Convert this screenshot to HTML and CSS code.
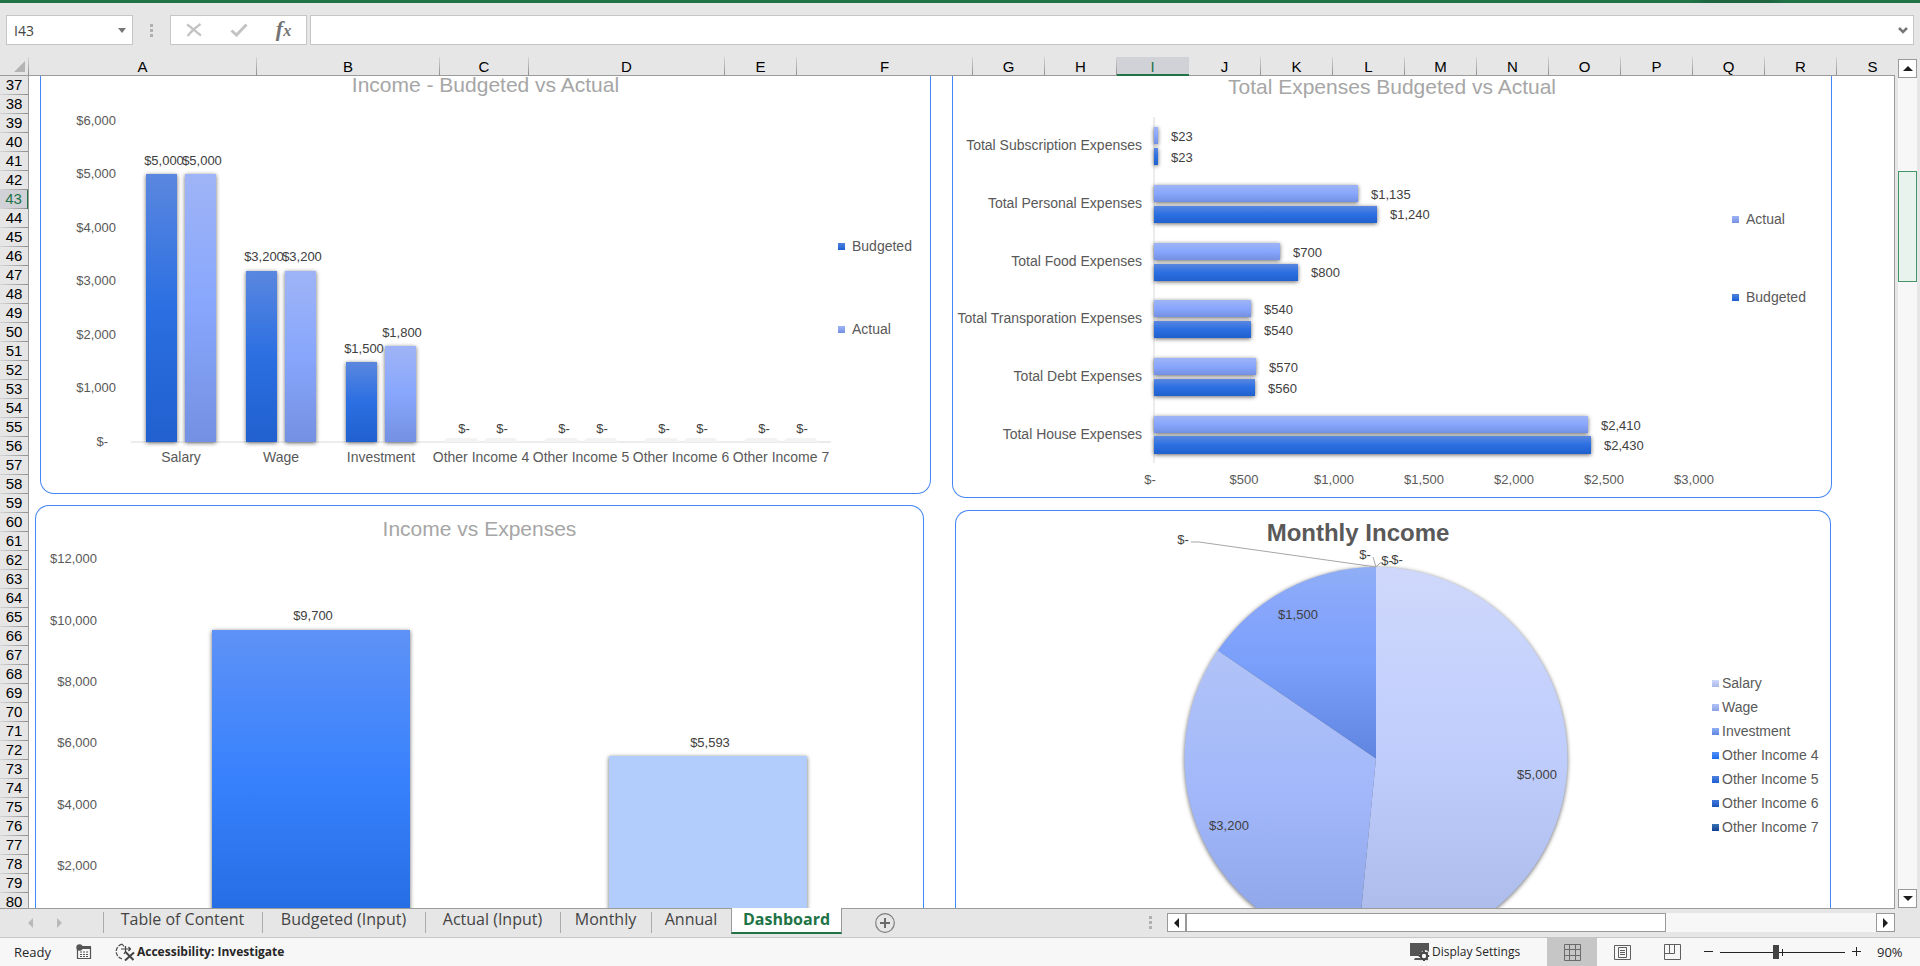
FILE: index.html
```html
<!DOCTYPE html>
<html lang="en">
<head>
<meta charset="utf-8">
<title>Budget Dashboard</title>
<link rel="stylesheet" href="styles.css">
</head>
<body>
<div class="title-strip"></div>

<header class="formula-row">
  <div class="name-box">
    <input class="name-input" type="text" value="I43" aria-label="Name box">
    <button class="icon-btn name-drop" aria-label="Open name list"><svg width="8" height="5" viewBox="0 0 8 5"><path d="M0 0h8L4 5z" fill="#777"/></svg></button>
  </div>
  <div class="grip"><i></i><i></i><i></i></div>
  <div class="fx-group">
    <button class="icon-btn" aria-label="Cancel"><svg width="16" height="14" viewBox="0 0 16 14"><path d="M1 1.500C5 4 10 9 15 12.500M14.500 1C10 4 5 8.500 1.500 13" fill="none" stroke="#c3c3c3" stroke-width="2.200"/></svg></button>
    <button class="icon-btn" aria-label="Enter"><svg width="18" height="14" viewBox="0 0 18 14"><path d="M1.500 7.500L6.500 12 16.500 1.500" fill="none" stroke="#c3c3c3" stroke-width="3"/></svg></button>
    <button class="icon-btn fx" aria-label="Insert function">f<span class="fx-x">x</span></button>
  </div>
  <div class="formula-box">
    <input class="formula-input" type="text" aria-label="Formula bar">
    <button class="icon-btn formula-drop" aria-label="Expand formula bar"><svg width="10" height="7" viewBox="0 0 10 7"><path d="M1 1l4 4 4-4" fill="none" stroke="#777" stroke-width="2.500"/></svg></button>
  </div>
</header>

<main class="workbook">
  <div class="headings">
    <div class="corner"><svg width="11" height="11" viewBox="0 0 11 11"><path d="M11 0v11H0z" fill="#b4b4b4"/></svg></div>
    <div class="cols">
      <span>A</span><span>B</span><span>C</span><span>D</span><span>E</span><span>F</span><span>G</span><span>H</span><span class="sel">I</span><span>J</span><span>K</span><span>L</span><span>M</span><span>N</span><span>O</span><span>P</span><span>Q</span><span>R</span><span class="last">S</span>
    </div>
  </div>
  <div class="rows">
    <span>37</span><span>38</span><span>39</span><span>40</span><span>41</span><span>42</span><span class="sel">43</span><span>44</span><span>45</span><span>46</span><span>47</span><span>48</span><span>49</span><span>50</span><span>51</span><span>52</span><span>53</span><span>54</span><span>55</span><span>56</span><span>57</span><span>58</span><span>59</span><span>60</span><span>61</span><span>62</span><span>63</span><span>64</span><span>65</span><span>66</span><span>67</span><span>68</span><span>69</span><span>70</span><span>71</span><span>72</span><span>73</span><span>74</span><span>75</span><span>76</span><span>77</span><span>78</span><span>79</span><span>80</span>
  </div>

  <div class="sheet">
    <svg class="defs" width="0" height="0" aria-hidden="true">
      <defs>
        <linearGradient id="budget" x1="0" y1="0" x2="0" y2="1"><stop offset="0" stop-color="#5a87df"/><stop offset=".5" stop-color="#2b6fe2"/><stop offset="1" stop-color="#2160ce"/></linearGradient>
        <linearGradient id="actual" x1="0" y1="0" x2="0" y2="1"><stop offset="0" stop-color="#9fb4f6"/><stop offset=".5" stop-color="#87a6fc"/><stop offset="1" stop-color="#7490e2"/></linearGradient>
        <linearGradient id="income" x1="0" y1="0" x2="0" y2="1"><stop offset="0" stop-color="#5e92f7"/><stop offset=".5" stop-color="#3781fd"/><stop offset="1" stop-color="#226be0"/></linearGradient>
        <linearGradient id="salary" x1="0" y1="0" x2="0" y2="1"><stop offset="0" stop-color="#cfd8fb"/><stop offset=".5" stop-color="#bfcdfd"/><stop offset="1" stop-color="#a9b8e6"/></linearGradient>
        <linearGradient id="wage" x1="0" y1="0" x2="0" y2="1"><stop offset="0" stop-color="#b1c3f7"/><stop offset=".5" stop-color="#a1b7fa"/><stop offset="1" stop-color="#8ba2e4"/></linearGradient>
        <linearGradient id="invest" x1="0" y1="0" x2="0" y2="1"><stop offset="0" stop-color="#8faef5"/><stop offset=".2" stop-color="#88a6fb"/><stop offset=".5" stop-color="#7aa0fb"/><stop offset="1" stop-color="#6085e0"/></linearGradient>
      </defs>
    </svg>

    <div class="band band-upper">
      <section class="card card-budget">
        <h2>Income - Budgeted vs Actual</h2>
        <div class="chart">
          <svg class="plot" height="399" viewBox="41 94 790 399">
            <g class="tick end"><text x="116" y="125">$6,000</text><text x="116" y="178">$5,000</text><text x="116" y="232">$4,000</text><text x="116" y="285">$3,000</text><text x="116" y="339">$2,000</text><text x="116" y="392">$1,000</text><text x="108" y="446">$-</text></g>
            <rect x="131" y="441" width="700" height="2" fill="#ececec"/>
            <g fill="#f3f3f3"><path d="M443 442l4-4h29l4 4zM483 442l4-4h28l4 4zM543 442l4-4h29l4 4zM583 442l4-4h28l4 4zM643 442l4-4h29l4 4zM683 442l4-4h28l4 4zM743 442l4-4h29l4 4zM783 442l4-4h28l4 4z"/></g>
            <g class="shadow" fill="url(#budget)"><rect x="146" y="174" width="31" height="268"/><rect x="246" y="271" width="31" height="171"/><rect x="346" y="362" width="31" height="80"/></g>
            <g class="shadow" fill="url(#actual)"><rect x="185" y="174" width="31" height="268"/><rect x="285" y="271" width="31" height="171"/><rect x="385" y="346" width="31" height="96"/></g>
            <g class="value mid"><text x="164" y="165">$5,000</text><text x="202" y="165">$5,000</text><text x="264" y="261">$3,200</text><text x="302" y="261">$3,200</text><text x="364" y="353">$1,500</text><text x="402" y="337">$1,800</text><text x="464" y="433">$-</text><text x="502" y="433">$-</text><text x="564" y="433">$-</text><text x="602" y="433">$-</text><text x="664" y="433">$-</text><text x="702" y="433">$-</text><text x="764" y="433">$-</text><text x="802" y="433">$-</text></g>
            <g class="tick names mid"><text x="181" y="462">Salary</text><text x="281" y="462">Wage</text><text x="381" y="462">Investment</text><text x="481" y="462">Other Income 4</text><text x="581" y="462">Other Income 5</text><text x="681" y="462">Other Income 6</text><text x="781" y="462">Other Income 7</text></g>
          </svg>
          <ul class="legend"><li><i class="sw sw-budget"></i>Budgeted</li><li><i class="sw sw-actual"></i>Actual</li></ul>
        </div>
      </section>

      <section class="card card-expenses">
        <h2>Total Expenses Budgeted vs Actual</h2>
        <div class="chart">
          <svg class="plot" height="399" viewBox="953 98 772 399">
            <g class="tick names end"><text x="1142" y="150">Total Subscription Expenses</text><text x="1142" y="208">Total Personal Expenses</text><text x="1142" y="266">Total Food Expenses</text><text x="1142" y="323">Total Transporation Expenses</text><text x="1142" y="381">Total Debt Expenses</text><text x="1142" y="439">Total House Expenses</text></g>
            <rect x="1153" y="117" width="2" height="346" fill="#ececec"/>
            <g class="shadow" fill="url(#actual)"><rect x="1154" y="127" width="4" height="17"/><rect x="1154" y="185" width="204" height="17"/><rect x="1154" y="243" width="126" height="17"/><rect x="1154" y="300" width="97" height="17"/><rect x="1154" y="358" width="102" height="17"/><rect x="1154" y="416" width="434" height="17"/></g>
            <g class="shadow" fill="url(#budget)"><rect x="1154" y="148" width="4" height="17"/><rect x="1154" y="206" width="223" height="17"/><rect x="1154" y="264" width="144" height="17"/><rect x="1154" y="321" width="97" height="17"/><rect x="1154" y="379" width="101" height="17"/><rect x="1154" y="436" width="437" height="18"/></g>
            <g class="value"><text x="1171" y="141">$23</text><text x="1171" y="162">$23</text><text x="1371" y="199">$1,135</text><text x="1390" y="219">$1,240</text><text x="1293" y="257">$700</text><text x="1311" y="277">$800</text><text x="1264" y="314">$540</text><text x="1264" y="335">$540</text><text x="1269" y="372">$570</text><text x="1268" y="393">$560</text><text x="1601" y="430">$2,410</text><text x="1604" y="450">$2,430</text></g>
            <g class="tick mid"><text x="1150" y="484">$-</text><text x="1244" y="484">$500</text><text x="1334" y="484">$1,000</text><text x="1424" y="484">$1,500</text><text x="1514" y="484">$2,000</text><text x="1604" y="484">$2,500</text><text x="1694" y="484">$3,000</text></g>
          </svg>
          <ul class="legend"><li><i class="sw sw-actual"></i>Actual</li><li><i class="sw sw-budget"></i>Budgeted</li></ul>
        </div>
      </section>
    </div>

    <div class="band band-lower">
      <section class="card card-versus">
        <h2>Income vs Expenses</h2>
        <div class="chart">
          <svg class="plot" height="367" viewBox="36 541 887 367">
            <g class="tick end"><text x="97" y="563">$12,000</text><text x="97" y="625">$10,000</text><text x="97" y="686">$8,000</text><text x="97" y="747">$6,000</text><text x="97" y="809">$4,000</text><text x="97" y="870">$2,000</text></g>
            <g class="shadow"><rect x="212" y="630" width="198" height="300" fill="url(#income)"/><rect x="609" y="756" width="198" height="174" fill="#b2cdfb"/></g>
            <g class="value mid"><text x="313" y="620">$9,700</text><text x="710" y="747">$5,593</text></g>
          </svg>
        </div>
      </section>

      <section class="card card-pie">
        <h2>Monthly Income</h2>
        <svg class="plot" height="397" viewBox="956 511 750 397">
          <g class="shadow">
            <path d="M1376 758.500V567A191.500 191.500 0 1 1 1357.400 949.100Z" fill="url(#salary)"/>
            <path d="M1376 758.500L1357.400 949.100A191.500 191.500 0 0 1 1217.900 650.500Z" fill="url(#wage)"/>
            <path d="M1376 758.500L1217.900 650.500A191.500 191.500 0 0 1 1376 567Z" fill="url(#invest)"/>
          </g>
          <path d="M1191 542h8L1376 567M1373 557l3 10M1376 567l4-4h3" fill="none" stroke="#a6a6a6"/>
          <g class="value mid"><text x="1298" y="619">$1,500</text><text x="1537" y="779">$5,000</text><text x="1229" y="830">$3,200</text><text x="1183" y="544">$-</text><text x="1365" y="559">$-</text><text x="1387" y="565">$-</text><text x="1397" y="564">$-</text></g>
        </svg>
        <ul class="legend"><li><i class="sw sw-salary"></i>Salary</li><li><i class="sw sw-wage"></i>Wage</li><li><i class="sw sw-invest"></i>Investment</li><li><i class="sw sw-o4"></i>Other Income 4</li><li><i class="sw sw-o5"></i>Other Income 5</li><li><i class="sw sw-o6"></i>Other Income 6</li><li><i class="sw sw-o7"></i>Other Income 7</li></ul>
      </section>
    </div>
  </div>

  <div class="vscroll">
    <button class="icon-btn scroll-btn" aria-label="Scroll up"><svg width="10" height="5" viewBox="0 0 10 5"><path d="M5 0l5 5H0z" fill="#1e1e1e"/></svg></button>
    <div class="vtrack"><div class="vthumb"></div></div>
    <button class="icon-btn scroll-btn" aria-label="Scroll down"><svg width="10" height="5" viewBox="0 0 10 5"><path d="M0 0h10L5 5z" fill="#1e1e1e"/></svg></button>
  </div>
</main>

<nav class="tabbar">
  <div class="tab-arrows">
    <button class="icon-btn" aria-label="Previous sheet"><svg width="5" height="10" viewBox="0 0 5 10"><path d="M5 0v10L0 5z" fill="#b9b9b9"/></svg></button>
    <button class="icon-btn" aria-label="Next sheet"><svg width="5" height="10" viewBox="0 0 5 10"><path d="M0 0v10l5-5z" fill="#b9b9b9"/></svg></button>
  </div>
  <div class="tabs">
    <button class="tab w-toc">Table of Content</button><button class="tab w-bud">Budgeted (Input)</button><button class="tab w-act">Actual (Input)</button><button class="tab w-mon">Monthly</button><button class="tab w-ann">Annual</button><button class="tab tab-active">Dashboard</button>
  </div>
  <button class="icon-btn add-sheet" aria-label="New sheet"><svg width="20" height="20" viewBox="0 0 20 20"><circle cx="10" cy="10" r="9.300" fill="none" stroke="#7d7d7d" stroke-width="1.200"/><path d="M10 5v10M5 10h10" stroke="#6a6a6a" stroke-width="2"/></svg></button>
  <div class="grip tab-grip"><i></i><i></i><i></i></div>
  <div class="hscroll">
    <button class="icon-btn scroll-btn" aria-label="Scroll left"><svg width="5" height="10" viewBox="0 0 5 10"><path d="M5 0v10L0 5z" fill="#1e1e1e"/></svg></button>
    <div class="htrack"><div class="hthumb"></div></div>
    <button class="icon-btn scroll-btn" aria-label="Scroll right"><svg width="5" height="10" viewBox="0 0 5 10"><path d="M0 0v10l5-5z" fill="#1e1e1e"/></svg></button>
  </div>
</nav>

<footer class="status">
  <span class="ready">Ready</span>
  <button class="icon-btn macro" aria-label="Record macro"><svg width="16" height="16" viewBox="0 0 16 16"><path d="M1.500 5v9.500h13V3.500H6" fill="none" stroke="#555" stroke-width="1.200"/><path d="M6 2h9v3H6z" fill="#555"/><circle cx="3.500" cy="3.500" r="3.200" fill="#555"/><path d="M4 8h9M4 10.500h9M4 12.500h9" stroke="#555" stroke-dasharray="2 1"/></svg></button>
  <button class="access"><svg width="20" height="18" viewBox="0 0 20 18"><path d="M7 1.200A7.500 7.500 0 0 0 7 15.800" fill="none" stroke="#555" stroke-width="1.300" stroke-dasharray="4 1.300"/><path d="M9 3.500L7 1M6 6h9M13.500 4l2 2-2 2M10.500 3v5.500L9 11" fill="none" stroke="#444" stroke-width="1.200"/><path d="M10.500 9l8 8M19 9.500l-9 8" stroke="#444" stroke-width="2"/></svg><span>Accessibility: Investigate</span></button>
  <button class="display"><svg width="20" height="18" viewBox="0 0 20 18"><path d="M0 0h19v9l-3-2-5 2-2 4H0zM5 15h5v2H4z" fill="#555"/><circle cx="14" cy="13" r="3.200" fill="none" stroke="#444" stroke-width="2"/><path d="M14 7.500v2M14 16.500v2M8.800 13h2M17.200 13h2M10.300 9.300l1.400 1.400M16.300 15.300l1.400 1.400M17.700 9.300l-1.400 1.400M11.700 15.300l-1.400 1.400" stroke="#444" stroke-width="2"/></svg><span>Display Settings</span></button>
  <button class="icon-btn view view-on" aria-label="Normal view"><svg width="17" height="17" viewBox="0 0 17 17"><path d="M.5 .5h16v16H.5zM.5 5.500h16M.5 11.500h16M5.500 .5v16M11.500 .5v16" fill="none" stroke="#6b6b6b"/></svg></button>
  <button class="icon-btn view" aria-label="Page layout view"><svg width="17" height="15" viewBox="0 0 17 15"><path d="M.5 .5h16v14H.5zM4.500 2.500h8v10h-8zM6 5.500h5M6 7.500h5M6 9.500h5" fill="none" stroke="#5e5e5e"/></svg></button>
  <button class="icon-btn view" aria-label="Page break preview"><svg width="17" height="16" viewBox="0 0 17 16"><path d="M.5 .5h16v15H.5zM.5 9.500h10v-9M5.500 .5v9" fill="none" stroke="#5e5e5e"/></svg></button>
  <button class="icon-btn zoom-btn" aria-label="Zoom out"><svg width="9" height="10" viewBox="0 0 9 10"><path d="M0 4.500h9" stroke="#222"/></svg></button>
  <input class="zoom" type="range" min="10" max="190" value="90" aria-label="Zoom">
  <button class="icon-btn zoom-btn" aria-label="Zoom in"><svg width="10" height="10" viewBox="0 0 10 10"><path d="M0 4.500h9M4.500 0v9" stroke="#222"/></svg></button>
  <span class="percent">90%</span>
</footer>
</body>
</html>
```
FILE: styles.css
```css
* { box-sizing: border-box; }
body {
  margin: 0;
  height: 100vh;
  display: flex;
  flex-direction: column;
  overflow: hidden;
  background: #e6e6e6;
  color: #000;
  font-family: "Liberation Sans", Arial, sans-serif;
}
button, input { font: inherit; color: inherit; margin: 0; }
button { border: 0; padding: 0; background: none; }
svg { display: block; }
h2, ul { margin: 0; padding: 0; }
.icon-btn { display: flex; align-items: center; justify-content: center; }

.title-strip { height: 3px; flex: none; background: linear-gradient(90deg, #217346 88%, #1e6540 89%, #1e6540 92%, #217346 93%); }

/* formula bar */
.formula-row { flex: none; height: 54px; display: flex; padding: 12px 6px; }
.name-box, .fx-group, .formula-box { height: 30px; display: flex; background: #fff; border: 1px solid #c6c6c6; }
.name-box { width: 127px; }
.name-input, .formula-input { flex: 1; min-width: 0; border: 0; outline: 0; background: transparent; padding: 0 7px; font: 14px "Open Sans", sans-serif; color: #444; }
.name-drop { width: 20px; }
.grip { width: 37px; display: flex; flex-direction: column; align-items: center; justify-content: center; gap: 2px; }
.grip i { width: 3px; height: 3px; background: #b0b0b0; }
.fx-group { width: 137px; margin-right: 3px; }
.fx-group .icon-btn { width: 45px; }
.fx-group .fx { font: italic bold 22px "Liberation Serif", serif; color: #737373; padding-bottom: 3px; }
.fx-x { font-size: 16px; padding-top: 5px; }
.formula-box { flex: 1; }
.formula-drop { width: 20px; }

/* worksheet frame */
.workbook { flex: 1; min-height: 0; display: grid; grid-template-columns: 29px 1fr 25px; grid-template-rows: 19px minmax(0, 1fr); }
.headings { grid-column: 1 / 3; display: flex; border-bottom: 1px solid #9b9b9b; }
.corner { width: 29px; flex: none; display: flex; align-items: center; justify-content: flex-end; padding-right: 4px; background: linear-gradient(#d6d6d6, #8f8f8f) right / 1px 100% no-repeat; }
.cols { flex: 1; display: grid; grid-template-columns: 228fr 183fr 89fr 196fr 72fr 176fr 72fr 72fr 72fr 72fr 72fr 72fr 72fr 72fr 72fr 72fr 72fr 72fr 58fr; font-size: 15px; line-height: 20px; text-align: center; }
.cols span { height: 18px; padding-right: 1px; background: linear-gradient(#d6d6d6, #8f8f8f) right / 1px 100% no-repeat; }
.cols .sel { height: 19px; background: #d0d2d8; color: #217346; border-bottom: 2px solid #217346; }
.cols .last { background: none; padding-left: 14px; }
.rows { overflow: hidden; border-right: 1px solid #9b9b9b; font-size: 15px; text-align: center; }
.rows span { display: block; height: 19px; line-height: 17px; background: linear-gradient(90deg, #d6d6d6, #8f8f8f) bottom / 100% 1px no-repeat; }
.rows .sel { background-color: #d0d2d8; color: #217346; border-right: 1px solid #217346; }
.sheet { min-width: 0; overflow: hidden; background: #fff; border-right: 1px solid #9b9b9b; display: flex; flex-direction: column; }
.defs { position: absolute; }

/* charts */
.band { display: flex; }
.band-upper { flex: none; align-items: flex-start; padding: 0 62px 0 11px; gap: 21px; }
.band-lower { flex: 1; min-height: 0; padding: 0 63px 0 6px; gap: 31px; }
.card { min-width: 0; border: 1px solid #4285f4; overflow: hidden; background: #fff; }
.band-upper .card { border-top: 0; border-radius: 0 0 14px 14px; }
.band-lower .card { border-bottom: 0; border-radius: 14px 14px 0 0; }
.card h2 { text-align: center; font-size: 21px; font-weight: 400; line-height: 24px; color: #a6a6a6; }
.card-budget { flex: 891; }
.card-budget h2 { line-height: 18px; }
.card-expenses { flex: 880; }
.card-expenses h2 { line-height: 22px; }
.card-versus { flex: 889; margin-top: 7px; padding-top: 11px; }
.card-pie { flex: 876; margin-top: 12px; display: grid; grid-template-columns: 1fr 124px; align-items: start; }
.card-pie h2 { grid-area: 1 / 1 / 2 / 3; padding: 8px 70px 0 0; font-size: 24px; font-weight: 700; line-height: 28px; color: #595959; }
.card-pie .plot { grid-area: 1 / 1; width: 100%; }
.card-pie .legend { grid-area: 1 / 2; }
.chart { display: flex; }
.plot { flex: 1; min-width: 0; }
.tick, .value { font-size: 13px; }
.tick { fill: #595959; }
.names { font-size: 14px; }
.value { fill: #404040; }
.end { text-anchor: end; }
.mid { text-anchor: middle; }
.shadow { filter: drop-shadow(0 1px 2px rgba(0, 0, 0, .6)); }
.legend { list-style: none; font-size: 14px; line-height: 20px; color: #595959; white-space: nowrap; display: flex; flex-direction: column; }
.legend li { display: flex; align-items: center; gap: 7px; }
.card-budget .legend { width: 99px; padding: 142px 0 0 7px; gap: 63px; }
.card-expenses .legend { width: 106px; padding: 111px 0 0 7px; gap: 58px; }
.card-pie .legend { padding: 160px 0 0 6px; line-height: 24px; }
.card-pie .legend li { gap: 3px; }
.sw { width: 7px; height: 7px; }
.sw-budget { background: linear-gradient(#4f82e0, #1c5fd2); }
.sw-actual { background: linear-gradient(#9fb4f6, #7490e2); }
.sw-salary { background: linear-gradient(#cfd8fb, #a9b8e6); }
.sw-wage { background: linear-gradient(#b1c3f7, #8ba2e4); }
.sw-invest { background: linear-gradient(#8faef5, #6085e0); }
.sw-o4 { background: linear-gradient(#5592f8, #1d6bee); }
.sw-o5 { background: linear-gradient(#4f82e0, #1c5fd2); }
.sw-o6 { background: linear-gradient(#4379dc, #1853bb); }
.sw-o7 { background: linear-gradient(#3a74b4, #123f94); }

/* scroll bars */
.scroll-btn { width: 19px; height: 19px; flex: none; background: #fff; border: 1px solid #999; }
.vscroll { grid-area: 1 / 3 / 3 / 4; display: flex; flex-direction: column; padding: 2px 3px 0; }
.vtrack { flex: 1; padding-top: 93px; background: #f7f7f7; }
.vthumb { height: 111px; background: #e9f3ed; border: 1px solid #439467; }
.hscroll { width: 38.4%; flex: none; display: flex; }
.htrack { flex: 1; background: #f7f7f7; }
.hthumb { width: 69.5%; height: 19px; background: #fff; border: 1px solid #999; }

/* sheet tabs */
.tabbar { flex: none; height: 29px; display: flex; align-items: center; padding-right: 25px; font-family: "Open Sans", sans-serif; background: linear-gradient(#9b9b9b, #9b9b9b) left top / calc(100% - 25px) 1px no-repeat; }
.tab-arrows { width: 103px; flex: none; display: flex; gap: 24px; padding-left: 28px; }
.tabs { display: flex; align-self: stretch; flex: none; }
.tab { height: 29px; padding-bottom: 8px; font-size: 16px; line-height: 20px; color: #444; white-space: nowrap; background: linear-gradient(#ababab, #ababab) 0 4px / 1px 21px no-repeat; }
.w-toc { width: 159px; }
.w-bud { width: 163px; }
.w-act { width: 135px; }
.w-mon { width: 91px; }
.w-ann { width: 80px; }
.tab-active { width: 111px; height: 26px; padding-bottom: 3px; font-weight: 700; color: #217346; background: #fff; border: 1px solid #999; border-top: 0; border-bottom: 2px solid #217346; }
.add-sheet { width: 20px; margin-left: 33px; flex: none; }
.tab-grip { flex: 1; align-items: flex-end; padding-right: 15px; }

/* status bar */
.status { flex: none; height: 29px; display: flex; align-items: center; background: #f7f7f7; border-top: 1px solid #c6c6c6; font: 13px "Open Sans", sans-serif; line-height: 16px; color: #262626; white-space: nowrap; }
.status > * { flex: none; }
.ready { width: 76px; padding-left: 14px; }
.access, .display { display: flex; align-items: center; gap: 2px; font-size: 12px; }
.access { margin-left: 23px; font-weight: 700; }
.status .display { margin-left: auto; width: 137px; }
.view { width: 50px; height: 28px; }
.view-on { background: #c6c6c6; }
.zoom-btn { width: 23px; height: 28px; }
.zoom { width: 125px; height: 14px; appearance: none; outline: 0; background: linear-gradient(#222, #222) 62px 4px / 1px 7px no-repeat, linear-gradient(#222, #222) 0 7px / 100% 1px no-repeat; }
.zoom::-webkit-slider-thumb { appearance: none; width: 6px; height: 14px; background: #444; }
.percent { width: 52px; padding-left: 9px; }
```
